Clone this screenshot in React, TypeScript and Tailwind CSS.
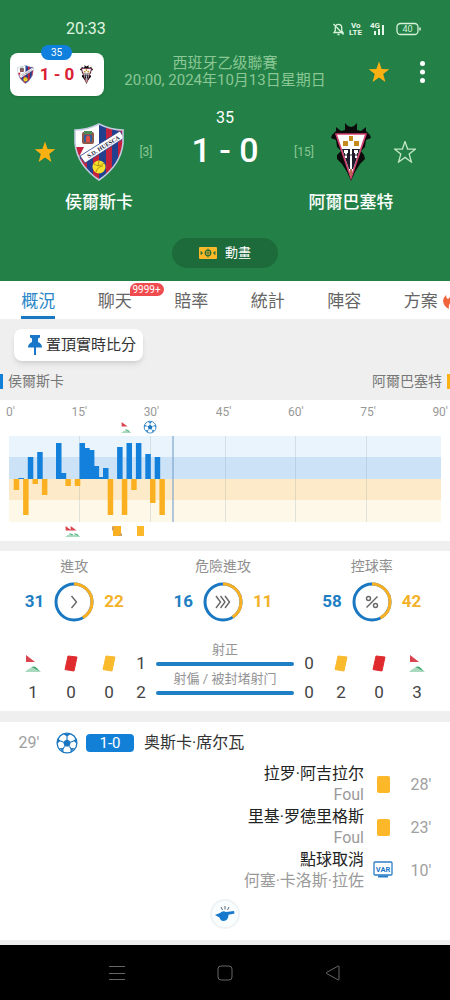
import { useState } from 'react';
import type { ReactNode } from 'react';
import clsx from 'clsx';

const TABS = ['概況', '聊天', '賠率', '統計', '陣容', '方案'];

const MINUTES = ["0'", "15'", "30'", "45'", "60'", "75'", "90'"];

// [slot, height] pairs, one slot per minute
const HOME_BARS = [
  [2, 1], [4, 22], [6, 27], [10, 36], [11, 6], [15, 36], [16, 31], [17, 29],
  [18, 13], [19, 2], [20, 11], [23, 32], [25, 36], [27, 36], [29, 25], [31, 22],
];
const AWAY_BARS = [
  [1, 11], [3, 36], [5, 5], [7, 16], [12, 7], [14, 7],
  [21, 36], [24, 36], [26, 11], [30, 24], [32, 36],
];
const SLOT_WIDTH = 4.7;

interface EventItem {
  minute: string;
  title: string;
  detail: string;
  kind: 'yellow' | 'var';
}

const AWAY_EVENTS: EventItem[] = [
  { minute: "28'", title: '拉罗·阿吉拉尔', detail: 'Foul', kind: 'yellow' },
  { minute: "23'", title: '里基·罗德里格斯', detail: 'Foul', kind: 'yellow' },
  { minute: "10'", title: '點球取消', detail: '何塞·卡洛斯·拉佐', kind: 'var' },
];

/* Icons */

function HuescaCrest({ className }: { className?: string }) {
  return (
    <svg viewBox="0 0 50 58" className={className} aria-hidden="true">
      <defs>
        <clipPath id="shield">
          <path d="M25 1 Q37 7 49 7 L49 20 Q47 42 25 57 Q3 42 1 20 L1 7 Q13 7 25 1Z" />
        </clipPath>
      </defs>
      <g clipPath="url(#shield)">
        <rect width="50" height="58" fill="#23408f" />
        <path d="M32 0h6v58h-6zM44 0h6v58h-6zM19 26h6v32h-6zM7 26h6v32H7z" fill="#c4213c" />
        <path d="M25 0h7v22h-7z" fill="#23408f" />
        <path d="M0 0h25v25L0 36z" fill="#fff" />
        <path d="M1 24h9l-5 10z" fill="#c4213c" />
        <rect x="8" y="9" width="12" height="12" rx="2" fill="#8d5a4a" />
        <rect x="10" y="8" width="8" height="3" fill="#4b8c5b" />
        <rect x="10" y="12" width="8" height="7" rx="1" fill="#2f5fa0" />
        <path d="M12 19v-5l2-2 2 2v5z" fill="#e25041" />
        <path d="M6 33 46 8l4 7L11 40z" fill="#fff" stroke="#23408f" strokeWidth="0.8" />
        <text
          x="29.5"
          y="26"
          transform="rotate(-32 29 24)"
          textAnchor="middle"
          fontSize="6"
          fontWeight="700"
          fill="#1c2340"
          fontFamily="Liberation Serif, serif"
        >
          S.D. HUESCA
        </text>
        <circle cx="25" cy="44" r="6.5" fill="#f7e12b" />
        <path d="M20 41q5 4 10-1M22 49q1-5 7-6M25 38l-1 5" fill="none" stroke="#a98c10" strokeWidth="0.9" />
      </g>
      <path
        d="M25 1 Q37 7 49 7 L49 20 Q47 42 25 57 Q3 42 1 20 L1 7 Q13 7 25 1Z"
        fill="none"
        stroke="#c3cbe0"
        strokeWidth="1.6"
      />
    </svg>
  );
}

function AlbaceteCrest({ className }: { className?: string }) {
  return (
    <svg viewBox="0 0 40 58" className={className} aria-hidden="true">
      <path
        d="M20 4 L17 3 L14 0 L14 7 L10 8 L5 4 L5 8 L1 12 L0 15 L5 17 L6 24 L10 28 L6 32 L6 36 L11 41 L16 49 L20 58 L24 49 L29 41 L34 36 L33 32 L30 28 L34 24 L35 17 L40 15 L39 12 L35 8 L35 4 L30 8 L26 7 L26 0 L23 3Z"
        fill="#0b0b0b"
      />
      <path d="M5 11h30L20 55z" fill="#fff" stroke="#d0406c" strokeWidth="1.6" />
      <path d="M11 26h18l-7 20h-4z" fill="#1e1c2c" />
      <path d="M19 26h2v26h-2z" fill="#fff" />
      <path d="M13 27h4v3h-1v5h-2v-5h-1zM23 27h4v3h-1v5h-2v-5h-1z" fill="#fff" />
      <path d="M13 32h14" stroke="#1e1c2c" strokeWidth="1" />
      <g fill="#c48a1c">
        <rect x="18" y="13" width="4" height="5" />
        <rect x="12" y="18" width="5" height="5" />
        <rect x="23" y="18" width="5" height="5" />
      </g>
      <path d="M19 46h2v7h-2z" fill="#b96a50" />
    </svg>
  );
}

function Star({ filled }: { filled?: boolean }) {
  return (
    <svg viewBox="0 0 22 22" className="size-[22px]" aria-hidden="true">
      <path
        d="M11 0.5 L13.6 8 L21.3 8.2 L15.2 13 L17.4 21 L11 16.4 L4.6 21 L6.8 13 L0.7 8.2 L8.4 8Z"
        fill={filled ? '#fdb012' : 'none'}
        stroke={filled ? 'none' : '#c3e6c6'}
        strokeWidth="1.3"
      />
    </svg>
  );
}

function BallShape() {
  return (
    <g>
      <circle cx="10" cy="10" r="9" fill="#fff" stroke="#1976c0" strokeWidth="1.2" />
      <path d="M10 6.4 13.6 9l-1.4 4.2H7.8L6.4 9z" fill="#1976c0" />
      <path
        d="M10 6.4V3.5M13.6 9l3-1M12.2 13.2l1.8 2.6M7.8 13.2 6 15.8M6.4 9l-3-1"
        stroke="#1976c0"
        strokeWidth="1"
      />
      <path
        d="M6.5 1.8h7L10 4.2zM18 6l1 5-3-3zM17 14.6l-4 3.6.6-3.4zM3 14.6l4 3.6-.6-3.4zM2 6l-1 5 3-3z"
        fill="#1976c0"
      />
    </g>
  );
}

function FlagShape() {
  return (
    <g>
      <path d="M1 0 10 7H1z" fill="#d9444f" />
      <path d="M0 17q8-9 16 0z" fill="#a9d9be" />
      <path d="M6 12q5-2 8 4-5-3-8-4z" fill="#3fa76f" />
    </g>
  );
}

function CornerFlag() {
  return (
    <svg viewBox="0 0 16 17" className="h-[17px] w-4" role="img" aria-label="Corner">
      <FlagShape />
    </svg>
  );
}

function TiltedCard({ color }: { color: string }) {
  return (
    <svg viewBox="0 0 16 17" className="h-[17px] w-4" aria-hidden="true">
      <path d="M5 1 14 2 11 16 2 14.6z" fill={color} stroke={color} strokeLinejoin="round" />
    </svg>
  );
}

function PinIcon() {
  return (
    <svg viewBox="0 0 14 20" className="h-5 w-3.5" aria-hidden="true">
      <path d="M2 0h10v2.5l-2 1V7q4 1.5 4 5.5H8V20H6v-7.5H0Q0 8.5 4 7V3.5l-2-1z" fill="#1976c9" />
    </svg>
  );
}

function StatusIcons() {
  return (
    <svg viewBox="0 0 92 16" className="h-4 w-[92px]" aria-label="Phone status" fill="none" stroke="#d7f3da">
      <path d="M3 11.5h9l-1.3-2V6.5a3.2 3.2 0 0 0-6.400 0v3zM6.5 13.5h2M2.5 3l10 10.5" strokeWidth="1.3" />
      <g fill="#e6f8e8" stroke="none" fontFamily="Roboto, sans-serif" fontWeight="700">
        <text x="20" y="7" fontSize="8">Vo</text>
        <text x="18" y="14" fontSize="8">LTE</text>
        <text x="39" y="7" fontSize="8">4G</text>
        <rect x="43" y="10" width="2" height="4" />
        <rect x="47" y="8" width="2" height="6" />
        <rect x="51" y="4" width="2" height="10" />
      </g>
      <rect x="66" y="2.5" width="21" height="11" rx="3.5" strokeWidth="1.3" />
      <path d="M89 6.5v3" strokeWidth="1.5" />
      <text x="76.5" y="11.2" textAnchor="middle" fontSize="9" fill="#d7f3da" stroke="none" fontFamily="Roboto, sans-serif">
        40
      </text>
    </svg>
  );
}

/* Header */

function MatchHeader() {
  return (
    <header className="bg-[#238147] pb-[13px] text-white">
      <div className="flex items-center justify-between pt-5 pr-[27px] pl-[66px] text-base leading-[18px] text-[#e0f6e2]">
        <span>20:33</span>
        <StatusIcons />
      </div>

      <div className="mt-2 grid h-[52px] grid-cols-[1fr_auto_1fr] items-center">
        <div className="relative mt-[5px] ml-2.5 flex h-[43px] w-[94px] items-center justify-between rounded-lg bg-white px-[7px] shadow">
          <span className="absolute -top-2 left-[31px] w-[31px] rounded-full bg-[#0f80dd] text-center text-[10px] leading-[15px]">
            35
          </span>
          <HuescaCrest className="h-[19px] w-[17px]" />
          <span className="text-[17px] font-bold text-[#da2033]">1 - 0</span>
          <AlbaceteCrest className="mr-1 h-[19px] w-[13px]" />
        </div>
        <div className="text-center text-[15px] leading-[17px] whitespace-nowrap text-[#8bc795]">
          <div>西班牙乙级聯賽</div>
          <div>20:00, 2024年10月13日星期日</div>
        </div>
        <div className="flex items-center justify-end gap-[30px] pr-[25px]">
          <button aria-label="Follow match">
            <Star filled />
          </button>
          <button aria-label="More">
            <svg viewBox="0 0 5 22" className="h-[22px] w-[5px]" fill="#fff">
              <circle cx="2.5" cy="2.5" r="2.5" />
              <circle cx="2.5" cy="11" r="2.5" />
              <circle cx="2.5" cy="19.5" r="2.5" />
            </svg>
          </button>
        </div>
      </div>

      <div className="flex items-start px-[34px] pt-2.5">
        <div className="mt-[15px] flex h-[58px] items-center">
          <button aria-label="Follow home team">
            <Star filled />
          </button>
          <HuescaCrest className="ml-[18px] h-[58px] w-[50px]" />
          <span className="ml-1.5 w-8 text-center text-xs text-[#8bc795]">[3]</span>
        </div>
        <div className="flex-1 text-center">
          <div className="text-base leading-5">35</div>
          <div className="text-[34px] leading-[44px] font-medium whitespace-nowrap">1 - 0</div>
        </div>
        <div className="mt-[15px] flex h-[58px] items-center">
          <span className="mr-1.5 w-8 text-center text-xs text-[#8bc795]">[15]</span>
          <AlbaceteCrest className="mx-[5px] h-[58px] w-10" />
          <button className="ml-[18px]" aria-label="Follow away team">
            <Star />
          </button>
        </div>
      </div>

      <div className="mt-[9px] flex justify-between px-[39px] text-center text-[17px] leading-6 font-medium">
        <span className="w-[120px]">侯爾斯卡</span>
        <span className="w-[120px]">阿爾巴塞特</span>
      </div>

      <button className="mx-auto mt-6 flex h-[30px] w-[106px] items-center justify-center gap-2 rounded-full bg-[#1d6b3a] text-[13px]">
        <svg viewBox="0 0 18 12" className="h-3 w-[18px]">
          <rect width="18" height="12" rx="1" fill="#fdb82a" />
          <circle cx="9" cy="6" r="2.8" fill="none" stroke="#1d6b3a" strokeWidth="1.2" />
          <path d="M9 1.5v9M6.5 6h5M2 4.5v3l1.5-1.5zM16 4.5v3l-1.5-1.5z" stroke="#1d6b3a" strokeWidth="0.8" fill="#1d6b3a" />
        </svg>
        動畫
      </button>
    </header>
  );
}

function TabBar() {
  const [active, setActive] = useState('概況');

  return (
    <nav className="flex overflow-hidden bg-white">
      {TABS.map((tab) => (
        <button
          key={tab}
          onClick={() => setActive(tab)}
          className={clsx(
            'relative flex h-[38px] w-[17%] shrink-0 justify-center text-[17px]',
            tab === active ? 'text-[#2a86c8]' : 'text-[#666]'
          )}
        >
          <span className={clsx('h-full border-b-[3px] pt-2 leading-6', tab === active ? 'border-[#1a78c2]' : 'border-transparent')}>
            {tab}
          </span>
          {tab === '聊天' && (
            <span className="absolute top-0.5 left-[53px] rounded-full rounded-bl-none bg-[#f04c50] px-[3px] text-[10px] leading-[13px] text-white">
              9999+
            </span>
          )}
          {tab === '方案' && (
            <svg viewBox="0 0 16 18" className="absolute top-2.5 right-0 h-[18px] w-4" aria-hidden="true">
              <path d="M9 0q6 5 6 10t-5 8q2-4-2-7-3 3-2 7-5-2-6-8 0-3 3-6 0 3 2 4 4-3 4-8z" fill="#f0653c" />
            </svg>
          )}
        </button>
      ))}
    </nav>
  );
}

/* Momentum chart */

function MomentumChart() {
  return (
    <section className="bg-white pb-0.5">
      <div className="flex justify-between pt-1 pr-0.5 pl-1.5 text-xs leading-4 text-[#999]">
        {MINUTES.map((m) => (
          <span key={m}>{m}</span>
        ))}
      </div>
      <div className="px-[9px]">
        <svg viewBox="0 0 432 119" className="w-full" role="img" aria-label="Attack momentum">
          <g transform="translate(112 2) scale(0.65)">
            <FlagShape />
          </g>
          <g transform="translate(134.5 0.5) scale(0.66)">
            <BallShape />
          </g>
          <rect y="16" width="432" height="21" fill="#e9f4fc" />
          <rect y="37" width="432" height="22" fill="#cbe2f7" />
          <rect y="59" width="432" height="21" fill="#fdeac8" />
          <rect y="80" width="432" height="22" fill="#fef8e8" />
          <path
            d="M70.5 16v86M141.5 16v86M216.5 16v86M286.5 16v86M357.5 16v86"
            stroke="#7a94a8"
            strokeOpacity="0.22"
          />
          {HOME_BARS.map(([slot, height]) => (
            <rect key={slot} x={slot * SLOT_WIDTH} y={59 - height} width="5.5" height={height} fill="#1380dc" />
          ))}
          {AWAY_BARS.map(([slot, height]) => (
            <rect key={slot} x={slot * SLOT_WIDTH} y="59" width="5.5" height={height} fill="#fbb022" />
          ))}
          <path d="M164 16v86" stroke="#7fa6cf" strokeWidth="1.2" />
          <g transform="translate(56 106) scale(0.65)">
            <FlagShape />
          </g>
          <g transform="translate(61 106) scale(0.65)">
            <FlagShape />
          </g>
          <path d="M104 106h8v10h-8z" fill="#fbb022" />
          <path d="M103 106l3 2-3 3zM109 116l4-3v3z" fill="#c9a066" />
          <path d="M128 106h7v10h-7z" fill="#fbb82a" />
        </svg>
      </div>
    </section>
  );
}

/* Stats */

interface RingStatProps {
  label: string;
  home: number;
  away: number;
  children: ReactNode;
}

function RingStat({ label, home, away, children }: RingStatProps) {
  const radius = 18;
  const length = 2 * Math.PI * radius;
  const awayLength = (away / (home + away)) * length;

  return (
    <div className="flex flex-col items-center">
      <div className="text-sm leading-5 text-[#8f8f8f]">{label}</div>
      <div className="mt-1.5 flex items-center gap-2.5 text-[17px] font-bold">
        <span className="w-5 text-right text-[#1f7fc4]">{home}</span>
        <svg viewBox="0 0 40 40" className="size-10" fill="none">
          <circle cx="20" cy="20" r={radius} stroke="#1a78c2" strokeWidth="3" />
          <circle
            cx="20"
            cy="20"
            r={radius}
            stroke="#fbb022"
            strokeWidth="3"
            strokeDasharray={`${awayLength} ${length}`}
            transform="rotate(-90 20 20)"
          />
          <g stroke="#666" strokeWidth="1.4">{children}</g>
        </svg>
        <span className="w-5 text-[#f3b229]">{away}</span>
      </div>
    </div>
  );
}

function StatColumn({ icon, value }: { icon: ReactNode; value: number }) {
  return (
    <div className="flex w-[38px] flex-col items-center">
      <div className="flex h-[29px] items-center">{icon}</div>
      <div className="h-[29px] leading-[29px]">{value}</div>
    </div>
  );
}

function ShotNumbers({ values }: { values: number[] }) {
  return (
    <div className="w-[26px] text-center leading-[29px]">
      {values.map((value, i) => (
        <div key={i}>{value}</div>
      ))}
    </div>
  );
}

function ShotBar({ label }: { label: string }) {
  return (
    <div className="flex h-[29px] flex-col justify-end">
      <span className="leading-6 whitespace-nowrap">{label}</span>
      <span className="h-1 rounded-full bg-[#1f7fc4]" />
    </div>
  );
}

function Stats() {
  return (
    <section className="bg-white pt-[5px] pb-1">
      <div className="mr-1 grid grid-cols-3">
        <RingStat label="進攻" home={31} away={22}>
          <path d="M17.5 14l5 6-5 6" />
        </RingStat>
        <RingStat label="危險進攻" home={16} away={11}>
          <path d="M13 14l4.5 6-4.5 6M17.5 14l4.5 6-4.5 6M22 14l4.5 6-4.5 6" />
        </RingStat>
        <RingStat label="控球率" home={58} away={42}>
          <path d="M25.5 14.5 14.5 25.5" />
          <circle cx="16.5" cy="16.5" r="2" />
          <circle cx="23.5" cy="23.5" r="2" />
        </RingStat>
      </div>

      <div className="mt-[27px] flex px-3.5 text-[17px] text-[#444]">
        <StatColumn icon={<CornerFlag />} value={1} />
        <StatColumn icon={<TiltedCard color="#df2b2e" />} value={0} />
        <StatColumn icon={<TiltedCard color="#f9bb2d" />} value={0} />
        <ShotNumbers values={[1, 2]} />
        <div className="-mt-3 flex-1 px-0.5 text-center text-[13px] text-[#949494]">
          <ShotBar label="射正" />
          <ShotBar label="射偏 / 被封堵射门" />
        </div>
        <ShotNumbers values={[0, 0]} />
        <StatColumn icon={<TiltedCard color="#f9bb2d" />} value={2} />
        <StatColumn icon={<TiltedCard color="#df2b2e" />} value={0} />
        <StatColumn icon={<CornerFlag />} value={3} />
      </div>
    </section>
  );
}

/* Events */

function VarIcon() {
  return (
    <svg viewBox="0 0 20 18" className="h-[18px] w-5" role="img">
      <rect x="1" y="1" width="18" height="13" rx="1" fill="#fff" stroke="#2b7fc6" strokeWidth="1.3" />
      <path d="M5 15.5h10" stroke="#2b7fc6" strokeWidth="2" />
      <text x="10" y="10.5" textAnchor="middle" fontSize="7.5" fontWeight="700" fill="#1976c9" fontFamily="Roboto, sans-serif">
        VAR
      </text>
    </svg>
  );
}

function Events() {
  return (
    <section className="bg-white pb-[11px]">
      <div className="flex h-[41px] items-center pl-2.5 text-base text-[#333]">
        <span className="w-[38px] text-center text-[#a0a0a0]">29'</span>
        <svg viewBox="0 0 20 20" className="ml-2 size-[22px]" role="img" aria-label="Goal">
          <BallShape />
        </svg>
        <span className="ml-2 w-12 rounded-sm bg-[#1380d8] text-center text-[15px] leading-[18px] text-white">1-0</span>
        <span className="ml-2.5">奥斯卡·席尔瓦</span>
      </div>

      <ul className="flex flex-col gap-px text-right text-base leading-[21px]">
        {AWAY_EVENTS.map((event) => (
          <li key={event.minute} className="flex items-center justify-end pr-2.5">
            <div>
              <div className="text-[#222]">{event.title}</div>
              <div className="text-[#9a9a9a]">{event.detail}</div>
            </div>
            <span className="flex w-[38px] justify-center">
              {event.kind === 'var' ? <VarIcon /> : <span className="h-[17px] w-[13px] rounded-xs bg-[#fdb82a]" />}
            </span>
            <span className="w-[38px] text-center text-[#a0a0a0]">{event.minute}</span>
          </li>
        ))}
      </ul>

      <div className="mx-auto mt-2 flex size-[30px] items-center justify-center rounded-full border-2 border-[#eef3f5] bg-[#fbfeff]">
        <svg viewBox="0 0 20 16" className="h-4 w-5" role="img" aria-label="Kick-off">
          <path d="M0 9 5 7q3-3 6-1l8-1 .5 2.5-6 1.2q0 6-5 6.3-3 0-4-3.5z" fill="#1478cd" />
          <path d="M6 1l1.5 3M10 0v3.5M14 1l-1.5 3" stroke="#55687a" strokeWidth="1" />
        </svg>
      </div>
    </section>
  );
}

function NavBar() {
  return (
    <nav className="flex h-[55px] items-center justify-center gap-[92px] bg-black">
      <button aria-label="Recent apps">
        <svg viewBox="0 0 16 16" className="size-4" stroke="#666" fill="none">
          <path d="M0 1.5h16M0 8.5h16M0 14.5h16" />
        </svg>
      </button>
      <button aria-label="Home">
        <svg viewBox="0 0 16 16" className="size-4" stroke="#666" fill="none">
          <rect x="1" y="1" width="14" height="14" rx="3" />
        </svg>
      </button>
      <button aria-label="Back">
        <svg viewBox="0 0 16 16" className="size-4" stroke="#666" fill="none">
          <path d="M14 1.5v13q0 .8-.8.4L1.5 8.5q-.6-.5 0-1L13.2 1q.8-.4.8.5z" />
        </svg>
      </button>
    </nav>
  );
}

export default function App() {
  return (
    <div className="overflow-hidden bg-[#efefef] font-['Roboto','Noto_Sans_CJK_TC',sans-serif]">
      <MatchHeader />
      <TabBar />

      <div className="pt-2.5 pb-2">
        <button className="ml-3.5 flex h-8 w-[129px] items-center gap-1 rounded-lg bg-white pl-3.5 text-[15px] whitespace-nowrap text-[#333] shadow-md">
          <PinIcon />
          置頂實時比分
        </button>
        <div className="mt-2.5 flex justify-between text-sm leading-[21px] text-[#777]">
          <span className="flex items-center gap-[5px]">
            <i className="h-[15px] w-[3px] bg-[#1380d8]" />
            侯爾斯卡
          </span>
          <span className="flex items-center gap-[5px]">
            阿爾巴塞特
            <i className="h-[15px] w-[3px] bg-[#fdb012]" />
          </span>
        </div>
      </div>

      <MomentumChart />
      <div className="h-2.5" />
      <Stats />
      <div className="h-[11px]" />
      <Events />
      <div className="h-[5px]" />
      <NavBar />
    </div>
  );
}
